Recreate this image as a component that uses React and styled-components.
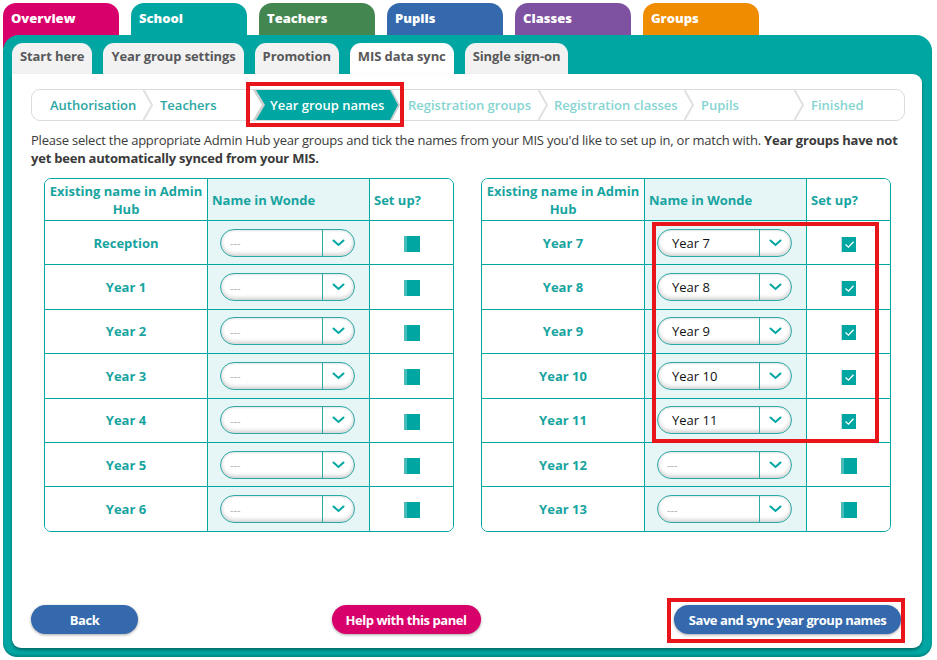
import React from "react";
import styled, { createGlobalStyle } from "styled-components";

const TEAL = "#00a6a2";
const TEAL_TEXT = "#17a4a0";
const RED = "#e8151b";

const Global = createGlobalStyle`
  html, body { margin: 0; padding: 0; background: #fff; }
  body { font-family: "Open Sans", "DejaVu Sans", sans-serif; }
  * { box-sizing: border-box; }
`;

const Page = styled.div`
  width: 937px;
  height: 660px;
  padding: 3px 5px 3px 3px;
  display: flex;
  flex-direction: column;
`;

const TopTabs = styled.div`
  display: flex;
  gap: 12px;
  height: 45px;
`;

const TopTab = styled.div`
  width: 116px;
  height: 45px;
  background: ${(p) => p.$color};
  border-radius: 13px 13px 0 0;
  color: #fff;
  font-weight: 800;
  font-size: 13px;
  line-height: 18px;
  padding: 6px 8px;
`;

const Panel = styled.div`
  position: relative;
  margin-top: -13px;
  flex: 1;
  background: ${TEAL};
  border-radius: 16px 16px 14px 14px;
  padding: 8px 10px 9px 9px;
  display: flex;
  flex-direction: column;
  box-shadow: inset 0 -2px 2px rgba(0, 0, 0, 0.18);
`;

const SubTabs = styled.div`
  display: flex;
  gap: 11px;
  height: 31px;
`;

const SubTab = styled.div`
  height: 31px;
  padding: 3px 8px 0 8px;
  border-radius: 11px 11px 0 0;
  background: ${(p) => (p.$active ? "#fff" : "#f2f2f2")};
  color: #58585a;
  font-weight: 700;
  font-size: 13px;
  letter-spacing: -0.1px;
  line-height: 20px;
  white-space: nowrap;
`;

const Content = styled.div`
  flex: 1;
  background: #fff;
  border-radius: 0 9px 9px 9px;
  padding: 15px 17px 14px 19px;
  display: flex;
  flex-direction: column;
  box-shadow: 0 2px 3px rgba(0, 60, 58, 0.55);
`;

const Breadcrumb = styled.div`
  height: 32px;
  border: 1px solid #dcdcdc;
  border-radius: 9px;
  display: flex;
  align-items: stretch;
`;

const Step = styled.div`
  width: ${(p) => (p.$w ? `${p.$w}px` : "auto")};
  flex: ${(p) => (p.$w ? "none" : "1")};
  padding-left: ${(p) => p.$pad}px;
  display: flex;
  align-items: center;
  font-size: 13px;
  font-weight: 600;
  color: ${(p) => (p.$done ? "#2aa6a3" : "#86d5d2")};
  white-space: nowrap;
`;

const Sep = styled.svg`
  width: 10px;
  height: 30px;
  flex: none;
`;

const ActiveStep = styled.div`
  position: relative;
  width: 147px;
  flex: none;
  padding-left: 17px;
  display: flex;
  align-items: center;
  font-size: 13px;
  font-weight: 600;
  color: #fff;
  white-space: nowrap;

  &::before,
  &::after {
    content: "";
    position: absolute;
    inset: 0;
  }
  &::before {
    background: #cfcfcf;
    clip-path: polygon(0 0, 139px 0, 147px 15px, 139px 30px, 0 30px, 9px 15px);
  }
  &::after {
    background: ${TEAL};
    clip-path: polygon(3px 0, 137px 0, 145px 15px, 137px 30px, 3px 30px, 12px 15px);
  }
  span {
    position: relative;
    z-index: 1;
  }
`;

const Mark = styled.div`
  position: absolute;
  border: 4px solid ${RED};
  left: ${(p) => p.$l}px;
  top: ${(p) => p.$t}px;
  width: ${(p) => p.$w}px;
  height: ${(p) => p.$h}px;
  pointer-events: none;
  z-index: 3;
`;

const Intro = styled.p`
  margin: 10px 0 0;
  font-size: 13px;
  line-height: 18px;
  letter-spacing: -0.22px;
  color: #3a3a3a;
  b { font-weight: 700; }
`;

const Tables = styled.div`
  margin: 11px 14px 0 13px;
  display: flex;
  gap: 27px;
`;

const TableWrap = styled.div`
  position: relative;
  flex: 1;
`;

const Table = styled.table`
  width: 100%;
  border-collapse: separate;
  border-spacing: 0;
  border: 1px solid ${TEAL};
  border-radius: 7px;
  overflow: hidden;
  table-layout: fixed;
`;

const Th = styled.th`
  height: 41px;
  padding: 0 4px;
  font-size: 13px;
  line-height: 18px;
  font-weight: 700;
  color: ${TEAL_TEXT};
  text-align: ${(p) => (p.$center ? "center" : "left")};
  background: ${(p) => (p.$tint ? "#e6f5f5" : "#fff")};
  border-left: ${(p) => (p.$first ? "none" : `1px solid ${TEAL}`)};
`;

const Td = styled.td`
  height: 44.4px;
  padding: 0;
  border-top: 1px solid ${TEAL};
  border-left: ${(p) => (p.$first ? "none" : `1px solid ${TEAL}`)};
  background: ${(p) => (p.$tint ? "#e6f5f5" : "#fff")};
  text-align: center;
  vertical-align: middle;
  font-size: 13px;
  font-weight: 700;
  color: ${TEAL_TEXT};
`;

const SelectBox = styled.div`
  margin-left: 12px;
  width: 135px;
  height: 28px;
  border: 1px solid #2aa9a6;
  border-radius: 14px;
  background: #fff;
  box-shadow: inset 0 -2px 4px rgba(0, 0, 0, 0.2), inset 0 1px 2px rgba(0, 0, 0, 0.08);
  display: flex;
  align-items: stretch;
`;

const SelectValue = styled.div`
  flex: 1;
  display: flex;
  align-items: center;
  padding-left: ${(p) => (p.$empty ? 9 : 14)}px;
  font-size: ${(p) => (p.$empty ? 11 : 13)}px;
  font-weight: 400;
  color: ${(p) => (p.$empty ? "#b0b0b0" : "#111")};
  text-align: left;
`;

const SelectArrow = styled.div`
  width: 32px;
  border-left: 1px solid #2aa9a6;
  display: flex;
  align-items: center;
  justify-content: center;
`;

const Box = styled.span`
  display: inline-flex;
  align-items: center;
  justify-content: center;
  vertical-align: middle;
  width: ${(p) => (p.$checked ? 15 : 16)}px;
  height: ${(p) => (p.$checked ? 15 : 16)}px;
  background: ${(p) =>
    p.$checked ? TEAL : `linear-gradient(to right, #47bcb8 0 3px, ${TEAL} 3px)`};
  border-left: ${(p) => (p.$checked ? "1px solid #c9d6d6" : "none")};
`;

const Footer = styled.div`
  margin-top: auto;
  display: flex;
  justify-content: space-between;
  align-items: center;
  padding-right: 4px;
`;

const ButtonWrap = styled.div`
  position: relative;
`;

const Button = styled.button`
  height: 29px;
  width: ${(p) => p.$w}px;
  border: none;
  border-radius: 15px;
  background: ${(p) => p.$color};
  color: #fff;
  font-family: "Open Sans", sans-serif;
  font-weight: 700;
  font-size: 13px;
  letter-spacing: -0.45px;
  box-shadow: 0 1px 3px rgba(0, 0, 0, 0.35);
  padding: 0;
  white-space: nowrap;
`;

const Chevron = () => (
  <svg width="13" height="8" viewBox="0 0 13 8">
    <polyline points="1.5,1.5 6.5,6 11.5,1.5" fill="none" stroke={TEAL} strokeWidth="2" strokeLinecap="round" />
  </svg>
);

const Select = ({ value }) => (
  <SelectBox>
    <SelectValue $empty={!value}>{value || "---"}</SelectValue>
    <SelectArrow>
      <Chevron />
    </SelectArrow>
  </SelectBox>
);

const Check = ({ checked }) => (
  <Box $checked={checked}>
    {checked && (
      <svg width="11" height="9" viewBox="0 0 11 9">
        <polyline points="1.5,4.5 4.5,7.2 9.5,1.8" fill="none" stroke="#fff" strokeWidth="1.3" />
      </svg>
    )}
  </Box>
);

const Separator = () => (
  <Sep viewBox="0 0 10 30">
    <polyline points="0.5,0 9,15 0.5,30" fill="none" stroke="#e1e1e1" strokeWidth="2" />
  </Sep>
);

const YearTable = ({ rows, children }) => (
  <TableWrap>
    <Table>
      <colgroup>
        <col style={{ width: 162 }} />
        <col style={{ width: 162 }} />
        <col />
      </colgroup>
      <thead>
        <tr>
          <Th $first $center>Existing name in Admin Hub</Th>
          <Th $tint>Name in Wonde</Th>
          <Th>Set up?</Th>
        </tr>
      </thead>
      <tbody>
        {rows.map((r) => (
          <tr key={r.name}>
            <Td $first>{r.name}</Td>
            <Td $tint>
              <Select value={r.value} />
            </Td>
            <Td>
              <Check checked={!!r.value} />
            </Td>
          </tr>
        ))}
      </tbody>
    </Table>
    {children}
  </TableWrap>
);

const leftRows = ["Reception", "Year 1", "Year 2", "Year 3", "Year 4", "Year 5", "Year 6"].map((n) => ({ name: n }));
const rightRows = [
  { name: "Year 7", value: "Year 7" },
  { name: "Year 8", value: "Year 8" },
  { name: "Year 9", value: "Year 9" },
  { name: "Year 10", value: "Year 10" },
  { name: "Year 11", value: "Year 11" },
  { name: "Year 12" },
  { name: "Year 13" },
];

const topTabs = [
  ["Overview", "#d8006b"],
  ["School", TEAL],
  ["Teachers", "#448650"],
  ["Pupils", "#3469ad"],
  ["Classes", "#7e52a1"],
  ["Groups", "#f08c00"],
];

const subTabs = ["Start here", "Year group settings", "Promotion", "MIS data sync", "Single sign-on"];

export default function App() {
  return (
    <>
      <Global />
      <Page>
        <TopTabs>
          {topTabs.map(([t, c]) => (
            <TopTab key={t} $color={c}>
              {t}
            </TopTab>
          ))}
        </TopTabs>
        <Panel>
          <SubTabs>
            {subTabs.map((t) => (
              <SubTab key={t} $active={t === "MIS data sync"}>
                {t}
              </SubTab>
            ))}
          </SubTabs>
          <Content>
            <Breadcrumb>
              <Step $w={111} $pad={18} $done>Authorisation</Step>
              <Separator />
              <Step $w={100} $pad={7} $done>Teachers</Step>
              <ActiveStep>
                <span>Year group names</span>
                <Mark $l={-7} $t={-8} $w={158} $h={45} />
              </ActiveStep>
              <Step $w={138} $pad={8}>Registration groups</Step>
              <Separator />
              <Step $w={136} $pad={6}>Registration classes</Step>
              <Separator />
              <Step $w={100} $pad={7}>Pupils</Step>
              <Separator />
              <Step $pad={7}>Finished</Step>
            </Breadcrumb>
            <Intro>
              Please select the appropriate Admin Hub year groups and tick the names from your MIS you'd like to set up in, or match with.{" "}
              <b>Year groups have not yet been automatically synced from your MIS.</b>
            </Intro>
            <Tables>
              <YearTable rows={leftRows} />
              <YearTable rows={rightRows}>
                <Mark $l={171} $t={44} $w={227} $h={221} />
              </YearTable>
            </Tables>
            <Footer>
              <Button $w={107} $color="#3469ad">Back</Button>
              <Button $w={149} $color="#d8006b">Help with this panel</Button>
              <ButtonWrap>
                <Button $w={227} $color="#3469ad">Save and sync year group names</Button>
                <Mark $l={-7} $t={-7} $w={238} $h={45} />
              </ButtonWrap>
            </Footer>
          </Content>
        </Panel>
      </Page>
    </>
  );
}
